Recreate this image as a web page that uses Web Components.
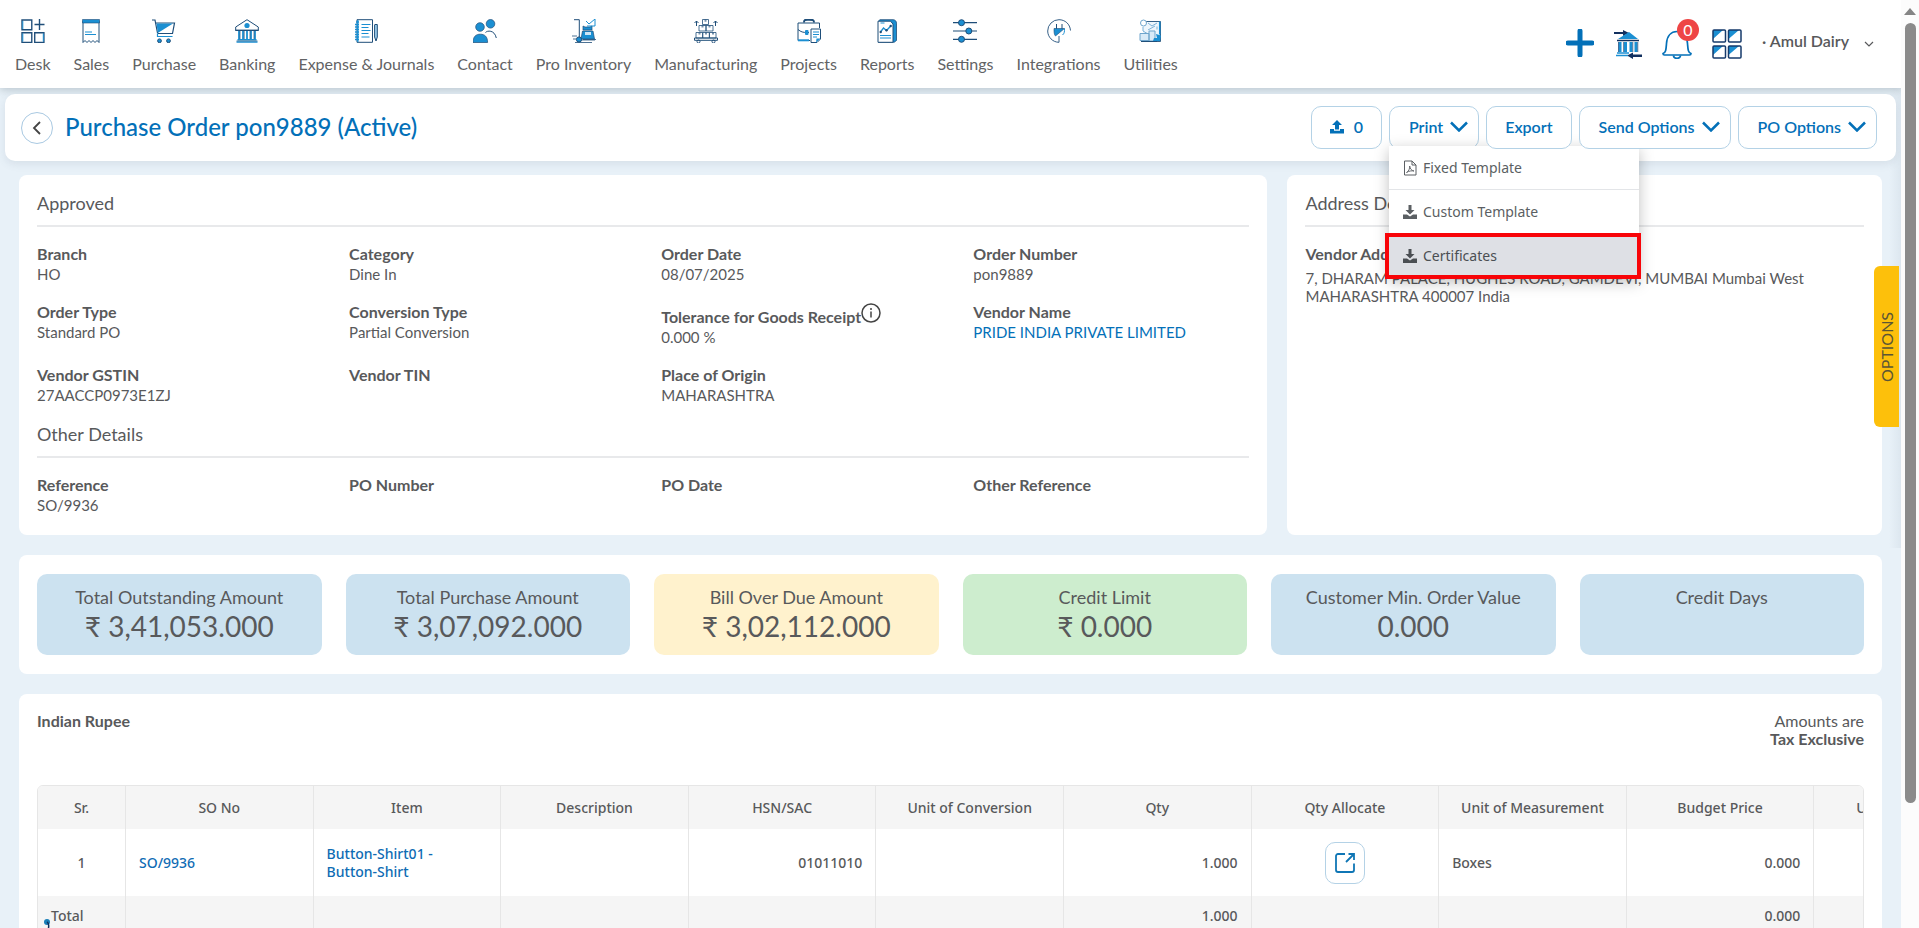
<!DOCTYPE html>
<html lang="en">
<head>
<meta charset="utf-8">
<title>Purchase Order pon9889</title>
<style>
  html, body { margin: 0; height: 100%; }
  body {
    --blue: #0370b8;
    --ink: #58595b;
    --edge: #b4d2e6;
    --line: #e8e9eb;
    --page: #e8f1f8;
    font: 16px/20px Lato, "Noto Sans", sans-serif;
    color: var(--ink);
    background: var(--page);
  }
</style>
</head>
<body>
<app-shell>
  <top-bar slot="header">
    <nav-item icon="desk">Desk</nav-item>
    <nav-item icon="sales">Sales</nav-item>
    <nav-item icon="cart">Purchase</nav-item>
    <nav-item icon="bank">Banking</nav-item>
    <nav-item icon="journal">Expense &amp; Journals</nav-item>
    <nav-item icon="people">Contact</nav-item>
    <nav-item icon="trolley">Pro Inventory</nav-item>
    <nav-item icon="boxes">Manufacturing</nav-item>
    <nav-item icon="briefcase">Projects</nav-item>
    <nav-item icon="report">Reports</nav-item>
    <nav-item icon="sliders">Settings</nav-item>
    <nav-item icon="plug">Integrations</nav-item>
    <nav-item icon="util">Utilities</nav-item>
  </top-bar>

  <title-bar heading="Purchase Order pon9889 (Active)">
    <action-button icon="upload">0</action-button>
    <action-button caret open>Print
      <drop-menu slot="menu">
        <menu-entry icon="pdf">Fixed Template</menu-entry>
        <menu-entry icon="download">Custom Template</menu-entry>
        <menu-entry icon="download" marked>Certificates</menu-entry>
      </drop-menu>
    </action-button>
    <action-button>Export</action-button>
    <action-button caret>Send Options</action-button>
    <action-button caret>PO Options</action-button>
  </title-bar>

  <details-row>
    <panel-card>
      <section-heading>Approved</section-heading>
      <field-grid>
        <field-item label="Branch">HO</field-item>
        <field-item label="Category">Dine In</field-item>
        <field-item label="Order Date">08/07/2025</field-item>
        <field-item label="Order Number">pon9889</field-item>
        <field-item label="Order Type">Standard PO</field-item>
        <field-item label="Conversion Type">Partial Conversion</field-item>
        <field-item label="Tolerance for Goods Receipt" info>0.000 %</field-item>
        <field-item label="Vendor Name" link>PRIDE INDIA PRIVATE LIMITED</field-item>
        <field-item label="Vendor GSTIN">27AACCP0973E1ZJ</field-item>
        <field-item label="Vendor TIN"></field-item>
        <field-item label="Place of Origin">MAHARASHTRA</field-item>
      </field-grid>
      <section-heading follow>Other Details</section-heading>
      <field-grid>
        <field-item label="Reference">SO/9936</field-item>
        <field-item label="PO Number"></field-item>
        <field-item label="PO Date"></field-item>
        <field-item label="Other Reference"></field-item>
      </field-grid>
    </panel-card>
    <panel-card>
      <section-heading>Address Details</section-heading>
      <address-block label="Vendor Address">7, DHARAM PALACE, HUGHES ROAD, GAMDEVI, MUMBAI Mumbai West MAHARASHTRA 400007 India</address-block>
    </panel-card>
  </details-row>

  <stat-row>
    <stat-card label="Total Outstanding Amount">₹ 3,41,053.000</stat-card>
    <stat-card label="Total Purchase Amount">₹ 3,07,092.000</stat-card>
    <stat-card label="Bill Over Due Amount" tone="warn">₹ 3,02,112.000</stat-card>
    <stat-card label="Credit Limit" tone="good">₹ 0.000</stat-card>
    <stat-card label="Customer Min. Order Value">0.000</stat-card>
    <stat-card label="Credit Days"></stat-card>
  </stat-row>

  <items-panel></items-panel>
</app-shell>

<script>
const N = '#1f4e79', B = '#1b8fd2';
const svg = (w, h, body, vb) =>
  `<svg width="${w}" height="${h}" viewBox="${vb || `0 0 ${w} ${h}`}" fill="none" aria-hidden="true">${body}</svg>`;

const ICONS = {
  desk: svg(24, 24, `<g stroke="${N}" stroke-width="1.4"><path d="M1 1h10v10H1zM1 14h10v10H1zM14 14h9.400v10H14z" transform="scale(.98)"/><path d="M18.500 0v11M13.500 5.500h10"/></g><path d="M1.800 2v8M1.800 14.500v8M22.300 14.500v8" stroke="${B}"/>`),
  sales: svg(24, 24, `<path d="M4 2v21.500l2-2 2 2 2-2 2 2 2-2 2 2 2-2 2 2V2" stroke="${N}"/><path d="M3.500.500h17V4h-17z" fill="${B}" stroke="${N}" stroke-width=".6"/><path d="M6 13h7M6 15.500h11" stroke="${B}" stroke-width="1.200"/>`),
  cart: svg(24, 24, `<path d="M0 1h3l2.500 13M4 4h18.500l-2 10.500H5.500" stroke="${N}" stroke-width="1.200"/><path d="M4.500 4.500H21L5.800 14z" fill="${B}"/><path d="M5.500 14.500v3h15" stroke="${B}" stroke-width="1.200"/><circle cx="7.500" cy="21.800" r="1.900" fill="${B}" stroke="${N}"/><circle cx="16.500" cy="21.800" r="1.900" fill="${B}" stroke="${N}"/>`),
  bank: svg(24, 24, `<path d="M.700 11.500V8L12 .700 23.300 8v3.500z" stroke="${N}" fill="#fff"/><circle cx="12" cy="6.500" r="2.600" fill="${B}"/><path d="M.500 11.300h23" stroke="${N}" stroke-width="1.400"/><path d="M4 12v8M8 12v8M12 12v8M16 12v8M20 12v8" stroke="${B}" stroke-width="1.800"/><path d="M5 12v8M9.200 12v8M15 12v8M19 12v8" stroke="${N}" stroke-width=".700"/><path d="M2.500 20.800h19M1.500 23h21" stroke="${B}" stroke-width="1.500"/><path d="M1.500 21.900h21" stroke="${N}" stroke-width=".600"/>`),
  journal: svg(24, 24, `<path d="M3 .700h15.500v22.600H3z" stroke="${N}"/><path d="M2 3h3M1 5.500h4M1 8h4M1 10.500h4M1 13h4M1 15.500h4M1 18h4M1 20.500h4" stroke="${B}" stroke-width="1.300"/><path d="M3.800 1v22" stroke="${B}" stroke-width="1.400"/><path d="M7.500 5.500h9M7.500 8.500h7M7.500 11.500h9M7.500 14.500h7M7.500 18h8" stroke="${B}"/><path d="M21 5.500h2.300v12.500L22 22l-1.400-4V5.500" stroke="${N}" fill="#9fd0ee"/>`),
  people: svg(24, 24, `<circle cx="7" cy="8" r="4.300" fill="${B}" stroke="${N}" stroke-width=".700"/><circle cx="17.500" cy="4.800" r="4.300" fill="${B}" stroke="${N}" stroke-width=".700"/><path d="M0 23.500c0-6 3-8.300 7.300-8.300s7.300 2.300 7.300 8.300z" fill="${B}" stroke="${N}" stroke-width=".700"/><path d="M12.500 13.500c1.500-2 9-3 10.800 5.500" stroke="${N}"/>`),
  trolley: svg(24, 24, `<path d="M2 .700h5.300V19" stroke="${N}"/><path d="M11 20.500h13M8 21h15M3 23.500h17M0 17h5M1 20h3" stroke="${N}" stroke-width=".800"/><path d="M11 7l2 1h5l2-1v4h-9zM10.500 12H21l1.500 8H9z" fill="${B}" stroke="${N}" stroke-width=".700"/><path d="M13 13h6v3h-6z" fill="#cfe6f5"/><path d="M14 2l3 3 6-5v7h-8" stroke="${B}"/><circle cx="7" cy="20.500" r="2.600" fill="${B}" stroke="${N}"/>`),
  boxes: svg(24, 24, `<path d="M8.500.500h6v5h-6zM5 6.500h7v5.500H5zM12 6.500h7v5.500h-7zM2 13.500h6.700V19H2zM8.700 13.500h6.700V19H8.700zM15.400 13.500H22V19h-6.600z" stroke="${N}" stroke-width=".800"/><path d="M10.500.500h2v2.300h-2zM7.500 6.500h2v2h-2zM14.500 6.500h2v2h-2zM4.500 13.500h2v2h-2zM11 13.500h2v2h-2zM18 13.500h2v2h-2z" fill="${N}" opacity=".6"/><path d="M.500 19h23v2.300H.500z" stroke="${N}"/><circle cx="4.500" cy="22.500" r="1.500" stroke="${N}"/><circle cx="19.500" cy="22.500" r="1.500" stroke="${N}"/><path d="M2.500 7V2M.500 4l2-2 2 2M21.500 7V2M19.500 4l2-2 2 2" stroke="${N}"/>`),
  briefcase: svg(24, 24, `<path d="M7 3.500C7 .500 8 .800 12 .800s5 0 5 2.700" stroke="${N}" stroke-width="2"/><path d="M22.500 9V4H1v17.500h12" stroke="${N}"/><path d="M1 10.500c3 2.500 5 3 9 3h2" stroke="${N}"/><rect x="8" y="11" width="3.500" height="5" rx="1" fill="${B}"/><path d="M1 21.300h11" stroke="${B}" stroke-width="2"/><path d="M14 10h9.500v10l-3.500 3.500h-6z" fill="#fff" stroke="${N}"/><path d="M16 13h6M16 15.500h6M16 18h4" stroke="${B}"/><path d="M19 23.500l.500-4h4z" fill="${B}"/>`),
  report: svg(24, 24, `<path d="M5 .700h13c2 0 3.500 1.500 3.500 3.500v17l-2 2H3.500V2z" fill="${B}" stroke="${N}" stroke-width=".800"/><path d="M3 2.200h12.500L18 5v18.300H3z" fill="#fff" stroke="${N}"/><path d="M5.500 13l3-4 3 2.500L16 6.800" stroke="${B}" stroke-width="1.300"/><circle cx="5.700" cy="13" r="1.200" fill="${N}"/><circle cx="11.500" cy="11.300" r="1.200" fill="${N}"/><circle cx="15.700" cy="7" r="1.200" fill="${N}"/><path d="M5.500 4h4M5 16.500h11M5 19h11" stroke="${B}"/>`),
  sliders: svg(24, 24, `<path d="M0 3.700h24M0 12h24M0 20.300h24" stroke="${N}" stroke-width="1.200"/><circle cx="8.500" cy="3.700" r="3" fill="${B}" stroke="${N}"/><circle cx="15.800" cy="12" r="3" fill="${B}" stroke="${N}"/><circle cx="8.500" cy="20.300" r="3" fill="${B}" stroke="${N}"/>`),
  plug: svg(24, 24, `<path d="M23.500 11.500C23 5 18 .700 12 .700A11.300 11.300 0 0 0 .700 12c0 6 5 11.300 11.300 11.300V17" stroke="${N}" stroke-width=".900"/><path d="M9.500 5v5M15 5v5" stroke="${N}"/><path d="M7 9.500h10.500L8.500 17C7 15.500 7 13 7 9.500z" fill="${B}" stroke="${N}" stroke-width=".600"/><path d="M17.500 9.500c0 3 0 5-2 6.500" stroke="${B}"/>`),
  util: svg(24, 24, `<path d="M3 2.500h18.500v20H5" stroke="${N}" fill="#eef6fc" stroke-width=".900"/><path d="M20.700 2.500v13" stroke="${B}" stroke-width="1.500"/><circle cx="4.500" cy="4" r="3" fill="#fff" stroke="#6fa5cc"/><path d="M9 4l4 3 5-3M18 7.500v3M4 8v4l5 3M9 11l7-4" stroke="#7db2d8"/><path d="M1 14.500h9v7H1zM10 12h6v10h-6z" fill="#d8eaf7" stroke="#6fa5cc"/><path d="M17 15l5 1.500-1 5.500h-7l1-3h3z" fill="${B}"/><path d="M2 22.500h16" stroke="${N}"/>`),
  plus: svg(28, 28, `<path d="M14 2v24M2 14h24" stroke="#0370b8" stroke-width="5" stroke-linecap="round"/>`),
  transfer: svg(28, 30, `<path d="M0 3h9V1l6 3-6 3V5H0z" fill="#12305f"/><path d="M28 25.500h-9v-2l-6 3 6 3.500v-2h9z" fill="#12305f"/><path d="M4 10l11-7 9 7z" fill="${B}"/><path d="M3 11.500h22" stroke="#12305f" stroke-width="1.500"/><path d="M6 13v10M11.500 13v10M17 13v10M22 13v10" stroke="${B}" stroke-width="3"/><path d="M4.500 13v10M9.500 13v10M18.800 13v10M23.800 13v10" stroke="#12305f" stroke-width=".600"/><path d="M3 24h12M2 26.500h12" stroke="${B}" stroke-width="1.500"/>`),
  bell: svg(30, 30, `<path d="M1 24.500c3-1 3-4 3.500-10C5 7 9 2.500 15 2.500S25 7 25.500 14.500c.5 6 .5 9 3.500 10 0 1-.5 1.500-1.500 1.500h-25C1.500 26 1 25.500 1 24.500z" stroke="#0370b8" stroke-width="1.700"/><path d="M11.500 26.500a3.500 2.800 0 0 0 7 0" stroke="#0370b8" stroke-width="1.700"/>`),
  tiles: svg(30, 30, `<path d="M1 1h10L1 10zM16.500 1H27L16.500 10zM1 17h10L1 26zM16.500 17H27L16.500 26z" fill="${B}"/><g stroke="#163a6b" stroke-width="1.500"><rect x="1" y="1" width="12.500" height="12" rx="1"/><rect x="16.500" y="1" width="12.500" height="12" rx="1"/><rect x="1" y="17" width="12.500" height="12" rx="1"/><rect x="16.500" y="17" width="12.500" height="12" rx="1"/></g>`),
  smallCaret: svg(10, 6, `<path d="M1 1l4 4 4-4" stroke="#58595b" stroke-width="1.200"/>`),
  back: svg(10, 14, `<path d="M8 1L2 7l6 6" stroke="#444" stroke-width="1.800"/>`),
  caret: svg(18, 11, `<path d="M1 1.500l8 8 8-8" stroke="#0370b8" stroke-width="2.500"/>`),
  upload: svg(14, 14, `<path d="M7 0l5 5H9v4.500H5V5H2z" fill="#0370b8"/><path d="M0 9h4v1.700h6V9h4v4.500H0z" fill="#0370b8"/>`),
  download: svg(14, 14, `<path d="M7 9.500L2.500 5H5.500V0h3v5h3z" fill="currentColor"/><path d="M0 9.500h4l3 2 3-2h4V14H0z" fill="currentColor"/>`),
  pdf: svg(14, 16, `<path d="M1.500 1h7.500l4 4v10h-11.500zM9 1v4h4" stroke="currentColor"/><path d="M3.500 12.500c2-1 3.500-4 3.200-6.500.3 3 2 4.500 4.300 5-2.500-.500-5 0-7.500 1.500z" stroke="currentColor" stroke-width=".900"/>`),
  info: svg(20, 20, `<circle cx="10" cy="10" r="9" stroke="#444" stroke-width="1.500"/><path d="M10 8.500v6" stroke="#444" stroke-width="1.500"/><circle cx="10" cy="6" r="1" fill="#444"/>`),
  launch: svg(20, 20, `<path d="M10 1H3a2 2 0 0 0-2 2v14a2 2 0 0 0 2 2h14a2 2 0 0 0 2-2v-6.500M13.500 1H19v6M18.500 1.500L11 9" stroke="#0f76b5" stroke-width="1.800"/>`)
};

function define(name, render) {
  customElements.define(name, class extends HTMLElement {
    constructor() {
      super();
      this.attachShadow({ mode: 'open' }).innerHTML = render(this);
    }
  });
}

define('app-shell', () => `
  <style>
    :host { display: flex; height: 100vh; overflow: hidden; }
    .page { flex: 1; min-width: 0; position: relative; overflow: hidden; }
    .body { display: flex; flex-direction: column; }
    .edge { position: absolute; top: 88px; right: 0; width: 12px; height: 460px;
            background: linear-gradient(to right, transparent, rgba(120,140,160,.1)); pointer-events: none; }
  </style>
  <div class="page">
    <slot name="header"></slot>
    <main class="body"><slot></slot></main>
    <div class="edge"></div>
    <options-tab></options-tab>
    <corner-mark></corner-mark>
  </div>
  <scroll-rail></scroll-rail>`);

define('scroll-rail', () => `
  <style>
    :host { flex: none; width: 18px; background: #fcfcfc; display: flex; flex-direction: column; align-items: center; }
    svg { margin: 8px 0; flex: none; }
    .thumb { width: 11px; height: 84%; border-radius: 6px; background: #8b8b8b; }
  </style>
  ${svg(12, 7, '<path d="M6 0l6 7H0z" fill="#858585"/>')}
  <div class="thumb"></div>`);

define('corner-mark', () => `
  <style>:host { position: absolute; left: 43px; bottom: 0; } svg { display: block; }</style>
  ${svg(10, 10, '<circle cx="4" cy="4" r="3" fill="#1a7fb8"/><path d="M4 4c2 1 2 3 1.500 6" stroke="#12305f" stroke-width="1.500"/>')}`);

define('options-tab', () => `
  <style>
    :host { position: absolute; right: 2px; top: 266px; }
    button { width: 25px; height: 161px; padding: 0; border: 0; border-radius: 0 6px 6px 0; background: #fdc00b;
             color: #5b5535; font: inherit; writing-mode: vertical-rl; transform: rotate(180deg); }
  </style>
  <button type="button">OPTIONS</button>`);

define('top-bar', () => `
  <style>
    :host { display: flex; justify-content: space-between; height: 88px; background: #fff;
            box-shadow: 0 2px 8px rgba(80,100,110,.3); }
    nav { display: flex; gap: 23px; padding: 19px 0 0 15px; }
    .tools { display: flex; align-items: flex-start; gap: 20px; padding: 29px 27px 0 0; }
    button { border: 0; background: none; padding: 0; margin: 0; font: inherit; color: inherit; display: block; position: relative; }
    button svg { display: block; }
    .badge { position: absolute; left: 15px; top: -10px; width: 22px; height: 22px; border-radius: 50%;
             background: #ee4545; color: #fff; line-height: 22px; text-align: center; }
    .user { display: flex; align-items: center; gap: 15px; font-weight: 600; line-height: 24px; }
    .user svg { margin-top: 6px; }
  </style>
  <nav aria-label="Main"><slot></slot></nav>
  <div class="tools">
    <button type="button" aria-label="Add">${ICONS.plus}</button>
    <button type="button" aria-label="Bank transfer">${ICONS.transfer}</button>
    <button type="button" aria-label="Notifications">${ICONS.bell}<span class="badge">0</span></button>
    <button type="button" aria-label="Apps">${ICONS.tiles}</button>
    <button type="button" class="user"><span>· Amul Dairy</span>${ICONS.smallCaret}</button>
  </div>`);

define('nav-item', el => `
  <style>
    :host { display: block; }
    a { display: flex; flex-direction: column; align-items: center; gap: 11px; color: #626365;
        text-decoration: none; white-space: nowrap; }
  </style>
  <a href="#">${ICONS[el.getAttribute('icon')]}<span><slot></slot></span></a>`);

define('title-bar', el => `
  <style>
    :host { display: flex; align-items: center; gap: 12px; position: relative; z-index: 2; height: 67px;
            margin: 6px 5px 0; padding: 0 19px 0 16px; box-sizing: border-box; background: #fff; border-radius: 10px;
            box-shadow: 0 3px 8px rgba(80,100,120,.12); }
    .back { width: 32px; height: 32px; border-radius: 50%; border: 1px solid #a9c9e2; background: #fff; padding: 0;
            display: grid; place-items: center; }
    h1 { margin: 0; flex: 1; padding-bottom: 2px; font-size: 24px; line-height: 32px; font-weight: 500; color: var(--blue); }
    .acts { display: flex; gap: 7px; }
  </style>
  <button class="back" type="button" aria-label="Back">${ICONS.back}</button>
  <h1>${el.getAttribute('heading')}</h1>
  <div class="acts"><slot></slot></div>`);

define('action-button', el => `
  <style>
    :host { display: block; position: relative; }
    button { height: 43px; display: flex; align-items: center; gap: 7px; padding: 0 18px 2px; background: #fff;
             border: 1px solid var(--edge); border-radius: 10px; color: var(--blue); white-space: nowrap;
             font: inherit; font-weight: 600; }
    :host([caret]) button { padding-left: 19px; padding-right: 10px; }
    :host([icon]) button { gap: 10px; }
    .menu { position: absolute; left: 0; top: 40px; }
  </style>
  <button type="button"${el.hasAttribute('open') ? ' aria-haspopup="menu" aria-expanded="true"' : ''}>${el.hasAttribute('icon') ? ICONS[el.getAttribute('icon')] : ''}<span><slot></slot></span>${el.hasAttribute('caret') ? ICONS.caret : ''}</button>
  <div class="menu"><slot name="menu"></slot></div>`);

define('drop-menu', () => `
  <style>
    :host { display: block; width: 250px; background: #fff; box-shadow: 0 4px 14px rgba(0,0,0,.25);
            font: 400 14px/20px "Noto Sans", sans-serif; }
  </style>
  <div role="menu"><slot></slot></div>`);

define('menu-entry', el => `
  <style>
    :host { display: block; position: relative; }
    a { display: flex; align-items: center; gap: 6px; height: 44px; box-sizing: border-box; padding: 0 14px;
        color: #5b5f63; text-decoration: none; }
    :host(:first-child) a { border-bottom: 1px solid #e3e5e8; }
    :host([marked]) a { background: #dee0e5; color: #4b4f53; }
    .frame { position: absolute; inset: -1px -2px -1px -4px; border: 4px solid #f80408; }
  </style>
  <a href="#" role="menuitem">${ICONS[el.getAttribute('icon')]}<span><slot></slot></span></a>
  ${el.hasAttribute('marked') ? '<div class="frame"></div>' : ''}`);

define('details-row', () => `
  <style>:host { display: grid; grid-template-columns: 21fr 10fr; gap: 20px; margin: 14px 19px 0; }</style>
  <slot></slot>`);

define('panel-card', () => `
  <style>:host { display: block; background: #fff; border-radius: 8px; padding: 16px 18px 20px 18px; }</style>
  <slot></slot>`);

define('section-heading', () => `
  <style>
    :host { display: block; border-bottom: 2px solid var(--line); padding-bottom: 10px; margin-bottom: 17px; }
    :host([follow]) { margin-top: 17px; }
    h2 { margin: 0; font-size: 18px; line-height: 24px; font-weight: 400; }
  </style>
  <h2><slot></slot></h2>`);

define('field-grid', () => `
  <style>:host { display: grid; grid-template-columns: repeat(4, minmax(0, 1fr)); gap: 18px 36px; }</style>
  <slot></slot>`);

define('field-item', el => `
  <style>
    :host { display: block; white-space: nowrap; }
    dl, dd { margin: 0; }
    dt { font-weight: 700; display: flex; }
    dd { font-size: 15px; min-height: 20px; }
    a { color: var(--blue); text-decoration: none; }
    :host([info]) dt { height: 25px; align-items: flex-start; }
    :host([info]) dt span { margin-top: 5px; }
    svg { margin-top: 1px; }
  </style>
  <dl><dt><span>${el.getAttribute('label')}</span>${el.hasAttribute('info') ? ICONS.info : ''}</dt>
  <dd>${el.hasAttribute('link') ? '<a href="#"><slot></slot></a>' : '<slot></slot>'}</dd></dl>`);

define('address-block', el => `
  <style>
    :host { display: block; }
    h3 { margin: 0 0 5px; font-size: 16px; line-height: 20px; }
    p { margin: 0; font-size: 15px; line-height: 18px; }
  </style>
  <h3>${el.getAttribute('label')}</h3><p><slot></slot></p>`);

define('stat-row', () => `
  <style>
    :host { display: grid; grid-template-columns: repeat(6, minmax(0, 1fr)); gap: 24px; margin: 20px 19px 0;
            padding: 19px 18px; background: #fff; border-radius: 8px; }
  </style>
  <slot></slot>`);

define('stat-card', el => `
  <style>
    :host { display: block; box-sizing: border-box; min-height: 81px; padding: 11px 8px 12px; border-radius: 10px; text-align: center;
            white-space: nowrap; background: #cce2f0; }
    :host([tone=warn]) { background: #fff2cd; }
    :host([tone=good]) { background: #cdedce; }
    .label { font-size: 18px; line-height: 24px; }
    .value { font-size: 28px; line-height: 34px; }
  </style>
  <div class="label">${el.getAttribute('label')}</div>
  <div class="value"><slot></slot></div>`);

define('items-panel', () => `
  <style>
    :host { display: block; margin: 20px 19px 0; padding: 18px; background: #fff; border-radius: 8px; }
    .top { display: flex; justify-content: space-between; line-height: 18px; margin-bottom: 37px; }
    .tax { text-align: right; }
    .tax span { display: block; }
    .wrap { border: 1px solid #e6e6e6; border-radius: 6px; overflow-x: auto; scrollbar-width: none; }
    table { table-layout: fixed; border-collapse: separate; border-spacing: 0; width: max(100%, 1964px);
            font: 500 14px/18px "Noto Sans", sans-serif; }
    .sr { width: 88px; }
    th, td { padding: 0 13px; border-right: 1px solid #e6e6e6; }
    th { height: 43px; font-weight: 500; background: #f5f5f5; }
    td { height: 67px; text-align: left; }
    td:first-child, .mid { text-align: center; }
    .num { text-align: right; }
    tfoot td { height: 40px; background: #f5f5f5; }
    tfoot td:first-child { text-align: left; }
    a { color: #0f6cb4; text-decoration: none; }
    button { width: 40px; height: 42px; display: grid; place-items: center; margin: 0 auto; padding: 0;
             border: 1px solid var(--edge); border-radius: 10px; background: #fff; }
  </style>
  <div class="top">
    <strong>Indian Rupee</strong>
    <div class="tax"><span>Amounts are</span><strong>Tax Exclusive</strong></div>
  </div>
  <div class="wrap">
    <table>
      <colgroup><col class="sr"><col span="10"></colgroup>
      <thead><tr><th>Sr.</th><th>SO No</th><th>Item</th><th>Description</th><th>HSN/SAC</th><th>Unit of Conversion</th>
        <th>Qty</th><th>Qty Allocate</th><th>Unit of Measurement</th><th>Budget Price</th><th>Unit Sales Price</th></tr></thead>
      <tbody><tr><td>1</td><td><a href="#">SO/9936</a></td><td><a href="#">Button-Shirt01 -<br>Button-Shirt</a></td><td></td>
        <td class="num">01011010</td><td></td><td class="num">1.000</td>
        <td class="mid"><button type="button" aria-label="Allocate quantity">${ICONS.launch}</button></td>
        <td>Boxes</td><td class="num">0.000</td><td></td></tr></tbody>
      <tfoot><tr><td>Total</td><td></td><td></td><td></td><td></td><td></td><td class="num">1.000</td><td></td><td></td>
        <td class="num">0.000</td><td></td></tr></tfoot>
    </table>
  </div>`);
</script>
</body>
</html>
